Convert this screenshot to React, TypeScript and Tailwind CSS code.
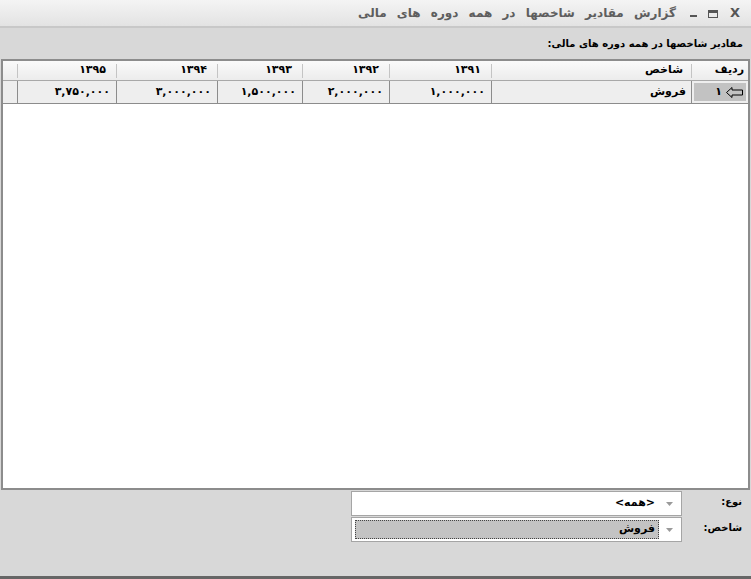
const FONT = "font-['DejaVu_Sans',sans-serif]";

const columns = [
  { title: "ردیف", w: "w-[57px]", pad: "pr-[4px]" },
  { title: "شاخص", w: "w-[200px]", pad: "pr-[8px]" },
  { title: "۱۳۹۱", w: "w-[102px]", pad: "pr-[10px]" },
  { title: "۱۳۹۲", w: "w-[87px]", pad: "pr-[10px]" },
  { title: "۱۳۹۳", w: "w-[85px]", pad: "pr-[10px]" },
  { title: "۱۳۹۴", w: "w-[101px]", pad: "pr-[10px]" },
  { title: "۱۳۹۵", w: "w-[99px]", pad: "pr-[10px]" },
];

const values = ["۱,۰۰۰,۰۰۰", "۲,۰۰۰,۰۰۰", "۱,۵۰۰,۰۰۰", "۳,۰۰۰,۰۰۰", "۳,۷۵۰,۰۰۰"];
const valueWidths = ["w-[102px]", "w-[87px]", "w-[85px]", "w-[101px]", "w-[99px]"];

function ArrowIcon() {
  return (
    <svg width="17" height="11" viewBox="0 0 17 11" className="shrink-0">
      <path d="M0.5 5.5 L6 0.5 L6 3 L16.5 3 L16.5 8 L6 8 L6 10.5 Z" fill="none" stroke="#000" strokeWidth="1" />
    </svg>
  );
}

function DropArrow() {
  return (
    <svg width="7" height="4" viewBox="0 0 7 4" className="shrink-0">
      <path d="M0 0 L7 0 L3.5 4 Z" fill="#9a9a9a" />
    </svg>
  );
}

function Combo({ value, selected }: { value: string; selected?: boolean }) {
  return (
    <div className="flex h-[25px] w-[331px] items-center border border-[#a5a5a5] bg-white pl-[3px] pr-[2px]">
      <div className="flex w-[20px] justify-center">
        <DropArrow />
      </div>
      <div
        className={
          selected
            ? "flex h-[19px] flex-1 items-center border border-dotted border-[#444] bg-[#c3c3c3] pr-[3px] text-[11px] font-bold text-black"
            : "flex h-[19px] flex-1 items-center pr-[4px] text-[11px] font-bold text-black"
        }
      >
        {value}
      </div>
    </div>
  );
}

function FilterRow({ label, value, selected }: { label: string; value: string; selected?: boolean }) {
  return (
    <div className="flex items-center">
      <div className="w-[69px] self-start pr-[9px] pt-[3px] text-[10px] font-bold text-black">{label}</div>
      <Combo value={value} selected={selected} />
    </div>
  );
}

export default function App() {
  return (
    <div className={`${FONT} flex h-[579px] w-[751px] flex-col bg-[#d8d8d8]`}>
      {/* Title bar */}
      <div className="flex h-[28px] items-center border-b-2 border-[#c8c8c8] bg-gradient-to-b from-[#f4f4f4] to-[#e3e3e3] pr-[11px]" dir="rtl">
        <div className="flex items-center text-[#555]">
          <span className="text-[13px] font-bold">X</span>
          <span className="mr-[12px] mt-[1px] h-[8px] w-[10px] border border-[#555] border-t-[3px]" />
          <span className="mr-[11px] mt-[6px] h-[2px] w-[7px] bg-[#555]" />
          <span className="mr-[14px] text-[12px] font-bold text-[#5e5e5e] [word-spacing:6px]">
            گزارش مقادیر شاخصها در همه دوره های مالی
          </span>
        </div>
      </div>

      {/* Content */}
      <div className="flex flex-1 flex-col border-b-[3px] border-[#666]">
        <div className="flex h-[31px] items-center px-[8px]" dir="rtl">
          <span className="text-[10px] font-bold text-black">مقادیر شاخصها در همه دوره های مالی:</span>
        </div>

        {/* Grid */}
        <div className="mx-[1px] flex h-[431px] flex-col border-2 border-[#8c8c8c] bg-white" dir="rtl">
          <div className="flex h-[20px] border-b border-[#a8a8a8] bg-gradient-to-b from-[#fafafa] to-[#ececec]">
            {columns.map((c) => (
              <div key={c.title} className={`${c.w} ${c.pad} flex items-center`}>
                <span className="flex-1 text-[11px] font-bold text-black">{c.title}</span>
                <span className="h-[14px] w-px bg-[#c4c4c4]" />
              </div>
            ))}
            <div className="flex-1" />
          </div>

          <div className="flex h-[23px] border-b border-[#8c8c8c] bg-[#eeeeee]">
            <div className="flex w-[57px] items-center border-l border-[#8c8c8c] p-[2px]">
              <div className="flex h-full flex-1 items-center gap-[4px] bg-[#c2c2c2] pr-[3px]">
                <ArrowIcon />
                <span className="text-[11px] font-bold text-black">۱</span>
              </div>
            </div>
            <div className="flex w-[200px] items-center border-l border-[#8c8c8c] pr-[5px] text-[11px] font-bold text-black">
              فروش
            </div>
            {values.map((v, i) => (
              <div
                key={i}
                className={`${valueWidths[i]} flex items-center border-l border-[#8c8c8c] pr-[6px] text-[11px] font-bold text-black`}
              >
                {v}
              </div>
            ))}
            <div className="flex-1" />
          </div>
        </div>

        {/* Filters */}
        <div className="mt-[1px] flex flex-col gap-[1px]" dir="rtl">
          <FilterRow label="نوع:" value="<همه>" />
          <FilterRow label="شاخص:" value="فروش" selected />
        </div>
      </div>
    </div>
  );
}
